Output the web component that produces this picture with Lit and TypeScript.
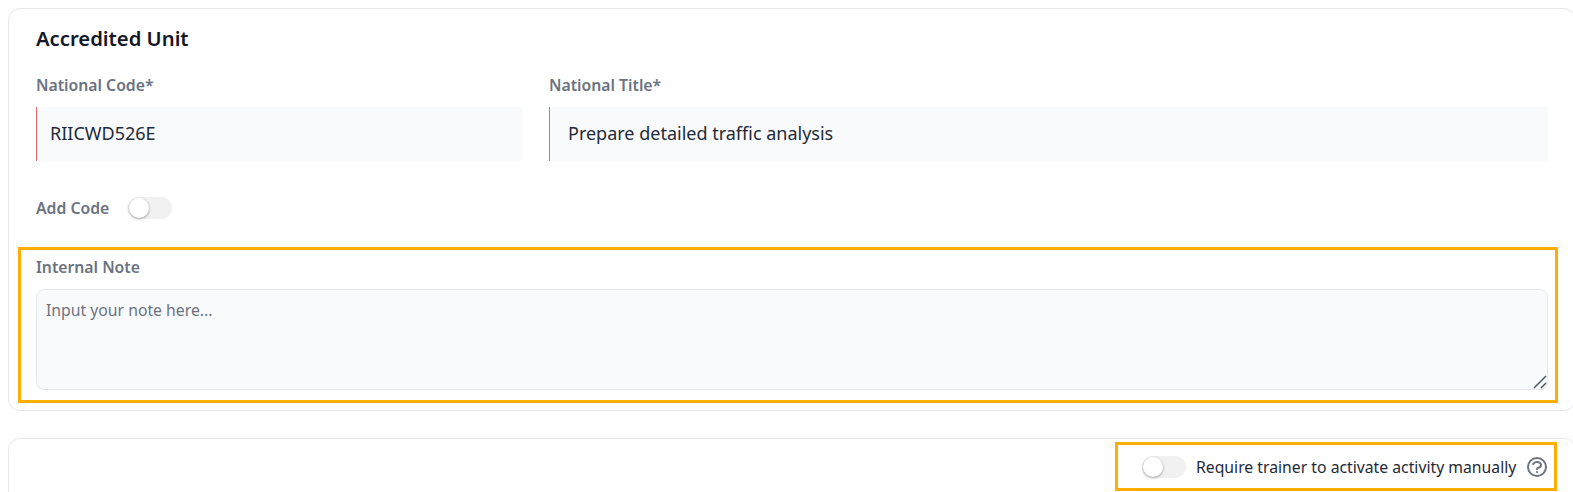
import { LitElement, html, css } from "lit";
import { customElement } from "lit/decorators.js";

@customElement("app-root")
export class AppRoot extends LitElement {
  static styles = css`
    :host {
      display: block;
      height: 492px;
      overflow: hidden;
      background: #fff;
      font-family: "Noto Sans", sans-serif;
      color: #111827;
      box-sizing: border-box;
      padding: 8px 0 0 8px;
    }
    * { box-sizing: border-box; }
    .card {
      border: 1px solid #e5e7eb;
      border-radius: 12px;
      background: #fff;
      margin-right: -3px;
    }
    .card1 { padding: 15px 0 7px; }
    .pad { padding: 0 27px; }
    h2 {
      margin: 0 0 23px;
      font-size: 20.25px;
      line-height: 28px;
      font-weight: 600;
      color: #111827;
    }
    .fields {
      display: grid;
      grid-template-columns: 486px 1fr;
      gap: 27px;
    }
    label, .lbl {
      display: block;
      font-size: 15.75px;
      line-height: 20px;
      font-weight: 600;
      color: #6b7280;
    }
    .field label { margin-bottom: 12px; }
    input {
      display: block;
      width: 100%;
      height: 54px;
      border: 0;
      border-left: 1px solid #e46a6a;
      border-radius: 0;
      background: #f9fafb;
      outline: 0;
      font: 400 18px "Noto Sans", sans-serif;
      color: #1f2937;
    }
    .code { padding: 0 0 2px 13px; }
    .title { padding: 0 0 2px 18px; }
    .addcode {
      display: flex;
      align-items: center;
      gap: 19px;
      margin-top: 36px;
    }
    .toggle {
      position: relative;
      display: block;
      width: 44px;
      height: 22px;
      border-radius: 11px;
      background: #f1f1f1;
      flex: none;
    }
    .toggle::after {
      content: "";
      position: absolute;
      left: 1px;
      top: 1px;
      width: 20px;
      height: 20px;
      border-radius: 50%;
      background: #fff;
      box-shadow: 0 1px 3px rgba(0, 0, 0, 0.35);
    }
    .note {
      margin: 28px 17px 0 9px;
      border: 3px solid #ffae00;
      padding: 7px 7px 10px 15px;
    }
    .note label { margin-bottom: 12px; }
    .ta { position: relative; }
    textarea {
      display: block;
      width: 100%;
      height: 101px;
      border: 1px solid #e5e7eb;
      border-radius: 8px;
      background: #f9fafb;
      padding: 8px 9px;
      outline: 0;
      resize: none;
      font: 400 15.75px/24px "Noto Sans", sans-serif;
      color: #1f2937;
    }
    textarea::placeholder { color: #6b7280; opacity: 1; }
    .grip {
      position: absolute;
      right: 1px;
      bottom: 1px;
      display: block;
      pointer-events: none;
    }
    .card2 {
      margin-top: 27px;
      height: 120px;
      padding: 3px 18px 0 0;
      display: flex;
      justify-content: flex-end;
      align-items: flex-start;
    }
    .manual {
      display: flex;
      align-items: center;
      width: 442px;
      height: 49px;
      border: 3px solid #ffae00;
      padding: 0 5px 0 24px;
    }
    .manual span {
      margin-left: 10px;
      font-size: 15.75px;
      line-height: 20px;
      color: #1f2937;
      white-space: nowrap;
    }
    .manual svg { margin-left: auto; flex: none; display: block; }
  `;

  render() {
    return html`
      <section class="card card1">
        <div class="pad">
          <h2>Accredited Unit</h2>
          <div class="fields">
            <div class="field">
              <label>National Code*</label>
              <input class="code" .value=${"RIICWD526E"} />
            </div>
            <div class="field">
              <label>National Title*</label>
              <input class="title" .value=${"Prepare detailed traffic analysis"} />
            </div>
          </div>
          <div class="addcode">
            <div class="lbl">Add Code</div>
            <i class="toggle"></i>
          </div>
        </div>
        <div class="note">
          <label>Internal Note</label>
          <div class="ta">
            <textarea placeholder="Input your note here..."></textarea>
            <svg class="grip" width="14" height="14" viewBox="0 0 14 14" fill="none" stroke="#4b5563" stroke-width="1.4">
              <path d="M1 13 13 1"></path>
              <path d="M8 13 13 8"></path>
            </svg>
          </div>
        </div>
      </section>
      <section class="card card2">
        <div class="manual">
          <i class="toggle"></i>
          <span>Require trainer to activate activity manually</span>
          <svg width="24" height="24" viewBox="0 0 24 24" fill="none" stroke="#6b7280" stroke-width="2" stroke-linecap="round" stroke-linejoin="round">
            <path d="M8.228 9c.549-1.165 2.03-2 3.772-2 2.21 0 4 1.343 4 3 0 1.4-1.278 2.575-3.006 2.907-.542.104-.994.54-.994 1.093m0 3h.01M21 12a9 9 0 1 1-18 0 9 9 0 0 1 18 0z"></path>
          </svg>
        </div>
      </section>
    `;
  }
}
